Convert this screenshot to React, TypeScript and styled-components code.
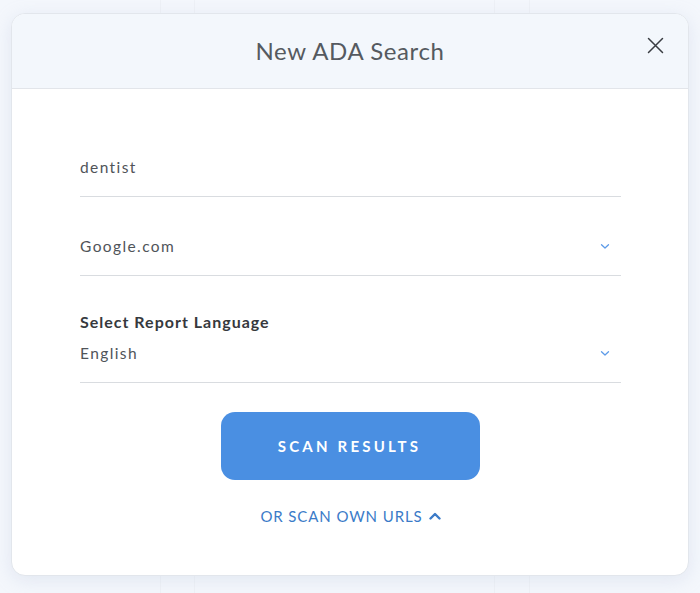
import React from "react";
import styled, { createGlobalStyle } from "styled-components";

const Global = createGlobalStyle`
  html, body { margin: 0; padding: 0; }
  body {
    font-family: Lato, "Open Sans", sans-serif;
    background: #f5f8fd;
  }
`;

const Backdrop = styled.div`
  height: 593px;
  box-sizing: border-box;
  padding: 13px 11px 17px;
  background-color: #f4f7fc;
  background-image:
    linear-gradient(to right, transparent 160px, #eef1f6 160px, #eef1f6 161px, transparent 161px),
    linear-gradient(to right, transparent 194px, #eef1f6 194px, #eef1f6 195px, transparent 195px),
    linear-gradient(to right, transparent 494px, #eef1f6 494px, #eef1f6 495px, transparent 495px),
    linear-gradient(to right, transparent 529px, #eef1f6 529px, #eef1f6 530px, transparent 530px);
`;

const Modal = styled.div`
  background: #fff;
  border-radius: 14px;
  border: 1px solid #e2e6ec;
  box-shadow: 0 4px 18px rgba(170, 185, 210, 0.25);
  overflow: hidden;
  height: 563px;
  box-sizing: border-box;
  display: flex;
  flex-direction: column;
`;

const Header = styled.div`
  position: relative;
  height: 74px;
  flex-shrink: 0;
  background: #f3f7fc;
  border-bottom: 1px solid #e2e5ea;
  display: flex;
  align-items: center;
  justify-content: center;
`;

const Title = styled.h2`
  margin: 0;
  font-size: 24px;
  font-weight: 400;
  color: #555a60;
  letter-spacing: 0.6px;
  padding-bottom: 2px;
`;

const CloseButton = styled.button`
  position: absolute;
  right: 23px;
  top: 21px;
  width: 20px;
  height: 20px;
  padding: 0;
  border: none;
  background: transparent;
  display: flex;
  align-items: center;
  justify-content: center;
  cursor: pointer;
`;

const Body = styled.div`
  padding: 68px 67px 0 68px;
  display: flex;
  flex-direction: column;
`;

const Field = styled.div<{ $gap?: number }>`
  margin-top: ${(p) => p.$gap ?? 0}px;
  padding-bottom: 19px;
  border-bottom: 1px solid #d9dce0;
  display: flex;
  flex-direction: column;
`;

const Label = styled.div`
  font-size: 16px;
  line-height: 20px;
  font-weight: 700;
  color: #36393d;
  letter-spacing: 1px;
  margin-bottom: 11px;
`;

const ValueRow = styled.div`
  display: flex;
  align-items: center;
  justify-content: space-between;
  height: 20px;
`;

const Value = styled.span`
  font-size: 15.5px;
  line-height: 20px;
  color: #505459;
  letter-spacing: 1.4px;
`;

const Chevron = styled.span`
  display: flex;
  margin-right: 11px;
`;

const Actions = styled.div`
  display: flex;
  flex-direction: column;
  align-items: center;
  margin-top: 29px;
`;

const ScanButton = styled.button`
  width: 259px;
  height: 68px;
  border: none;
  border-radius: 14px;
  background: #4a8fe2;
  color: #fff;
  font-family: Lato, sans-serif;
  font-size: 15px;
  font-weight: 700;
  letter-spacing: 3.2px;
  padding-left: 4px;
  cursor: pointer;
`;

const OwnLink = styled.a`
  margin-top: 26px;
  display: flex;
  align-items: center;
  gap: 6px;
  font-size: 15px;
  line-height: 20px;
  color: #3b7bc8;
  letter-spacing: 0.9px;
  text-decoration: none;
  cursor: pointer;
`;

const ChevronDown = () => (
  <svg width="10" height="7" viewBox="0 0 10 7">
    <path d="M1.5 1.8 L5 5 L8.5 1.8" fill="none" stroke="#5d9be8" strokeWidth="1.3" strokeLinecap="round" strokeLinejoin="round" />
  </svg>
);

export default function App() {
  return (
    <>
      <Global />
      <Backdrop>
        <Modal>
          <Header>
            <Title>New ADA Search</Title>
            <CloseButton aria-label="Close">
              <svg width="17" height="17" viewBox="0 0 17 17">
                <path d="M1.5 1.5 L15.5 15.5 M15.5 1.5 L1.5 15.5" stroke="#3a3d42" strokeWidth="1.5" strokeLinecap="round" />
              </svg>
            </CloseButton>
          </Header>
          <Body>
            <Field>
              <ValueRow>
                <Value>dentist</Value>
              </ValueRow>
            </Field>
            <Field $gap={39}>
              <ValueRow>
                <Value>Google.com</Value>
                <Chevron><ChevronDown /></Chevron>
              </ValueRow>
            </Field>
            <Field $gap={36}>
              <Label>Select Report Language</Label>
              <ValueRow>
                <Value>English</Value>
                <Chevron><ChevronDown /></Chevron>
              </ValueRow>
            </Field>
            <Actions>
              <ScanButton>SCAN RESULTS</ScanButton>
              <OwnLink>
                OR SCAN OWN URLS
                <svg width="12" height="8" viewBox="0 0 12 8">
                  <path d="M1.5 6.5 L6 2 L10.5 6.5" fill="none" stroke="#3b7bc8" strokeWidth="2.4" strokeLinecap="round" strokeLinejoin="round" />
                </svg>
              </OwnLink>
            </Actions>
          </Body>
        </Modal>
      </Backdrop>
    </>
  );
}
